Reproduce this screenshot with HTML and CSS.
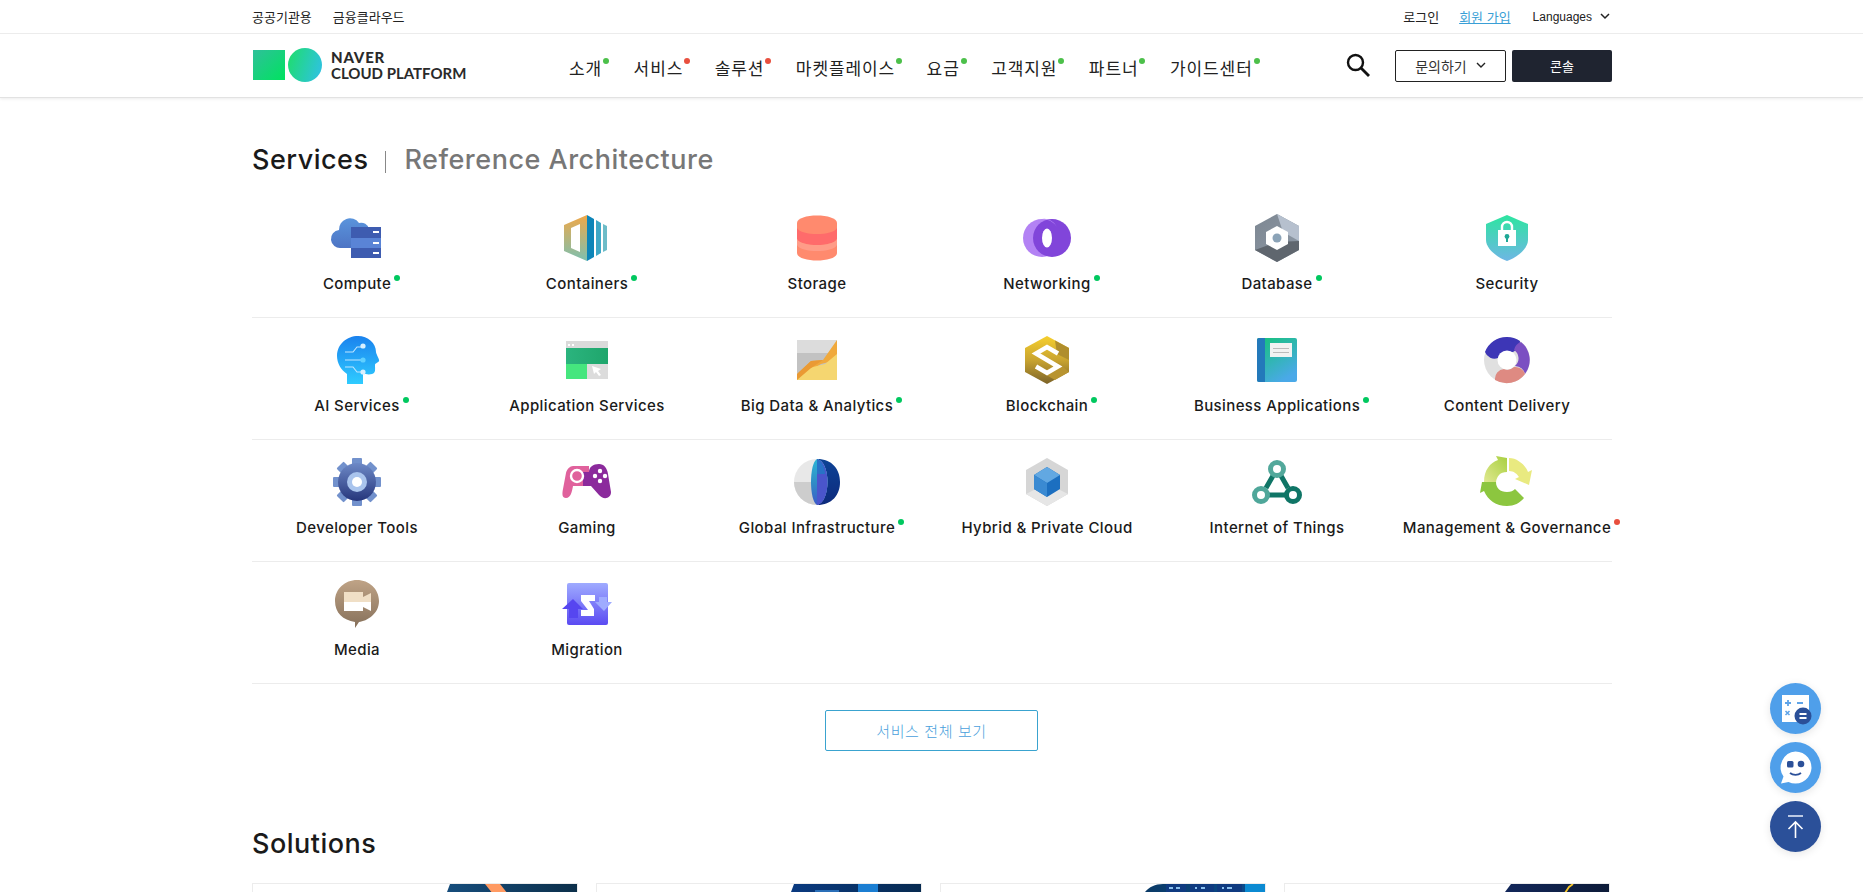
FILE: index.html
```html
<!DOCTYPE html>
<html lang="ko">
<head>
    <meta charset="UTF-8">
    <meta name="viewport" content="width=device-width, initial-scale=1.0">
    <title>NAVER CLOUD PLATFORM</title>
    <link rel="stylesheet" href="styles.css">
</head>
<body>
<div class="page">
    <header class="header">
        <div class="topbar">
            <div class="inner topbar-inner">
                <div class="top-links">
                    <a>공공기관용</a>
                    <a>금융클라우드</a>
                </div>
                <div class="top-links right">
                    <a>로그인</a>
                    <a class="join">회원 가입</a>
                    <a class="lang">Languages
                        <svg width="10" height="7" viewBox="0 0 10 7"><path d="M1 1l4 4 4-4" fill="none" stroke="#222" stroke-width="1.5"/></svg>
                    </a>
                </div>
            </div>
        </div>
        <div class="inner mainbar">
            <a class="logo">
                <svg width="70" height="34" viewBox="0 0 70 34">
                    <defs>
                        <linearGradient id="lgSq" x1="0" y1="0" x2="1" y2="1"><stop offset="0" stop-color="#2fc09a"/><stop offset="1" stop-color="#00e35f"/></linearGradient>
                        <linearGradient id="lgCi" x1="0" y1="0.3" x2="1" y2="0.6"><stop offset="0" stop-color="#1fdc72"/><stop offset="1" stop-color="#2ec3de"/></linearGradient>
                    </defs>
                    <rect x="0" y="2" width="32" height="30" fill="url(#lgSq)"/>
                    <circle cx="52" cy="17" r="17" fill="url(#lgCi)"/>
                </svg>
                <span class="logo-text"><b>NAVER</b><span>CLOUD PLATFORM</span></span>
            </a>
            <nav class="gnb">
                <a class="dot">소개</a>
                <a class="dot red">서비스</a>
                <a class="dot red">솔루션</a>
                <a class="dot">마켓플레이스</a>
                <a class="dot">요금</a>
                <a class="dot">고객지원</a>
                <a class="dot">파트너</a>
                <a class="dot">가이드센터</a>
            </nav>
            <div class="actions">
                <svg class="search" width="24" height="24" viewBox="0 0 24 24"><circle cx="9.5" cy="9.5" r="7.5" fill="none" stroke="#111" stroke-width="2.4"/><path d="M15 15l8 8" stroke="#111" stroke-width="2.8"/></svg>
                <a class="btn-ask">문의하기
                    <svg width="10" height="7" viewBox="0 0 10 7"><path d="M1 1l4 4 4-4" fill="none" stroke="#222" stroke-width="1.4"/></svg>
                </a>
                <a class="btn-console">콘솔</a>
            </div>
        </div>
    </header>

    <main class="inner">
        <div class="tabs">
            <h2 class="title">Services</h2>
            <span class="tab-sep"></span>
            <h2 class="title muted">Reference Architecture</h2>
        </div>

        <div class="svc-row">
            <a class="svc">
                <svg class="svc-icon" viewBox="0 0 60 60">
                    <defs><linearGradient id="g1" x1="0" y1="0" x2="0" y2="1"><stop offset="0" stop-color="#5a94dc"/><stop offset="1" stop-color="#4d74c4"/></linearGradient></defs>
                    <path d="M14 40a9 9 0 0 1-2-18 11 11 0 0 1 20-7 8 8 0 0 1 10 6v19z" fill="url(#g1)"/>
                    <rect x="24" y="19" width="30" height="11" fill="#3e5cb0"/>
                    <rect x="24" y="30" width="30" height="10" fill="#5a84d6"/>
                    <rect x="24" y="40" width="30" height="10" fill="#3e5cb0"/>
                    <path d="M46 23h6v2h-6zM46 34h6v2h-6zM46 44h6v2h-6z" fill="#fff"/>
                </svg>
                <span class="svc-name dot">Compute</span>
            </a>
            <a class="svc">
                <svg class="svc-icon" viewBox="0 0 60 60">
                    <defs><linearGradient id="g2" x1="0" y1="0" x2="0" y2="1"><stop offset="0" stop-color="#f0a848"/><stop offset="1" stop-color="#7cc0b0"/></linearGradient></defs>
                    <path d="M30 7v46L7 43V17zM23 16l-9 4v20l9 4z" fill="url(#g2)" fill-rule="evenodd"/>
                    <path d="M30 7l7 4v38l-7 4z" fill="#0d85b8"/>
                    <path d="M39 12l5 3v30l-5 3z" fill="#3fa8c6"/>
                    <path d="M46 16l4 2v24l-4 2z" fill="#6dbcc8"/>
                </svg>
                <span class="svc-name dot">Containers</span>
            </a>
            <a class="svc">
                <svg class="svc-icon" viewBox="0 0 60 60">
                    <path d="M10 15c0-10 40-10 40 0v30c0 10-40 10-40 0z" fill="#ff8a6e"/>
                    <path d="M10 20c4 8 36 8 40 0v11c-4 8-36 8-40 0z" fill="#ff6b6b"/>
                    <path d="M10 31c4 8 36 8 40 0v6c-4 8-36 8-40 0z" fill="#ff9c88"/>
                </svg>
                <span class="svc-name">Storage</span>
            </a>
            <a class="svc">
                <svg class="svc-icon" viewBox="0 0 60 60">
                    <circle cx="25" cy="30" r="19" fill="#b382f4"/>
                    <circle cx="35" cy="30" r="19" fill="#8145da"/>
                    <path d="M25 11a19 19 0 0 1 15 8 14 14 0 0 0-15-8z" fill="#b382f4"/>
                    <ellipse cx="30" cy="30" rx="5" ry="9.5" fill="#fff"/>
                </svg>
                <span class="svc-name dot">Networking</span>
            </a>
            <a class="svc">
                <svg class="svc-icon" viewBox="0 0 60 60">
                    <defs><linearGradient id="g5" x1="0" y1="0" x2="1" y2="1"><stop offset="0" stop-color="#7d8792"/><stop offset="1" stop-color="#8e99a6"/></linearGradient></defs>
                    <path d="M30 6l22 12v24L30 54 8 42V18z" fill="url(#g5)"/>
                    <path d="M30 6l22 12v15L36 24z" fill="#b6c0ce"/>
                    <path d="M8 42l22-8 22-1v9L30 54z" fill="#5f666e"/>
                    <path d="M30 18l11 6v12l-11 6-11-6V24z" fill="#fff"/>
                    <circle cx="30" cy="30" r="4.5" fill="#8ba3b7"/>
                </svg>
                <span class="svc-name dot">Database</span>
            </a>
            <a class="svc">
                <svg class="svc-icon" viewBox="0 0 60 60">
                    <defs><linearGradient id="g6" x1="0" y1="0" x2="0" y2="1"><stop offset="0" stop-color="#2de5a0"/><stop offset="1" stop-color="#6eb6e4"/></linearGradient></defs>
                    <path d="M30 7l21 9v16c0 9-12 18-21 21-9-3-21-12-21-21V16z" fill="url(#g6)"/>
                    <path d="M25 22v-3a5 5 0 0 1 10 0v3" fill="none" stroke="#fff" stroke-width="2.4"/>
                    <rect x="21" y="22" width="18" height="16" fill="#fff"/>
                    <circle cx="30" cy="28.5" r="2.4" fill="#1fa896"/>
                    <rect x="29" y="29" width="2" height="5" fill="#1fa896"/>
                </svg>
                <span class="svc-name">Security</span>
            </a>
        </div>

        <div class="svc-row">
            <a class="svc">
                <svg class="svc-icon" viewBox="0 0 60 60">
                    <defs><linearGradient id="g7" x1="0" y1="0" x2="0" y2="1"><stop offset="0" stop-color="#1a82ee"/><stop offset="1" stop-color="#2fccff"/></linearGradient></defs>
                    <path d="M31 6c10 0 18 7 18 16 0 2 4 8 3 9-1 2-4 2-4 4 0 4 1 8-3 9-3 1-7 0-9 0v10H20V44c-6-4-10-11-10-18C10 14 20 6 31 6z" fill="url(#g7)"/>
                    <g fill="none" stroke="#bfe6ff" stroke-width="1.1">
                        <path d="M36 17h-6l-4 5h-8M36 30H18M36 42h-6l-4-5h-8"/>
                    </g>
                    <circle cx="36" cy="16" r="2.6" fill="#d8f0ff"/>
                    <circle cx="36" cy="30" r="2.6" fill="#5fd0ff"/>
                    <circle cx="36" cy="42" r="2.6" fill="#d8f0ff"/>
                </svg>
                <span class="svc-name dot">AI Services</span>
            </a>
            <a class="svc">
                <svg class="svc-icon" viewBox="0 0 60 60">
                    <defs><linearGradient id="g8" x1="0" y1="0" x2="1" y2="0"><stop offset="0" stop-color="#2bb47e"/><stop offset="1" stop-color="#1fa66c"/></linearGradient></defs>
                    <rect x="9" y="11" width="42" height="7" fill="#dadada"/>
                    <rect x="9" y="18" width="42" height="16" fill="url(#g8)"/>
                    <rect x="9" y="34" width="21" height="15" fill="#45e67e"/>
                    <rect x="30" y="34" width="21" height="15" fill="#dcdcdc"/>
                    <path d="M35 36l9 3-3 2 3 4-2 1-3-4-2 2z" fill="#fff"/>
                    <path d="M11 14h2v2h-2zM15 14h2v2h-2z" fill="#fff"/>
                </svg>
                <span class="svc-name">Application Services</span>
            </a>
            <a class="svc">
                <svg class="svc-icon" viewBox="0 0 60 60">
                    <rect x="10" y="10" width="40" height="13" fill="#dcdcdc"/>
                    <rect x="10" y="23" width="40" height="27" fill="#c2c2c2"/>
                    <path d="M10 44l14-13 12-1 14-20v20L34 34l-8 5z" fill="#f0a93c"/>
                    <path d="M10 50v-6l16-7 12-3 12-10v26z" fill="#f5d670"/>
                    <path d="M10 50v-6l14-13 12-1-12 8z" fill="#ea9a34"/>
                </svg>
                <span class="svc-name dot">Big Data &amp; Analytics</span>
            </a>
            <a class="svc">
                <svg class="svc-icon" viewBox="0 0 60 60">
                    <defs><linearGradient id="g10" x1="0" y1="0" x2="0" y2="1"><stop offset="0" stop-color="#f6cf2e"/><stop offset="0.5" stop-color="#c9a430"/><stop offset="1" stop-color="#7c6328"/></linearGradient></defs>
                    <path d="M30 6l22 12v24L30 54 8 42V18z" fill="url(#g10)"/>
                    <path d="M38 10.4l14 7.6v12L40 24z" fill="#b08e2c"/>
                    <path d="M38 50l-14-8 4-2 14-7 10 9z" fill="#b89430"/>
                    <path d="M41 23.5l-11-6.500-11 6.500 22 13-11 6.500-11-6.500" fill="none" stroke="#fff" stroke-width="4.5"/>
                </svg>
                <span class="svc-name dot">Blockchain</span>
            </a>
            <a class="svc">
                <svg class="svc-icon" viewBox="0 0 60 60">
                    <defs><linearGradient id="g11" x1="0" y1="0" x2="0.6" y2="1"><stop offset="0" stop-color="#14c377"/><stop offset="1" stop-color="#4aa9e8"/></linearGradient></defs>
                    <rect x="10" y="8" width="40" height="44" rx="2" fill="url(#g11)"/>
                    <path d="M12 8h6v44h-6a2 2 0 0 1-2-2V10a2 2 0 0 1 2-2z" fill="#2379ba"/>
                    <rect x="23" y="13" width="22" height="14" fill="#f2f2f2"/>
                    <path d="M26 18h16v1H26zM26 22h16v1H26z" fill="#bbb"/>
                </svg>
                <span class="svc-name dot">Business Applications</span>
            </a>
            <a class="svc">
                <svg class="svc-icon" viewBox="0 0 60 60">
                    <circle cx="30" cy="30" r="23" fill="#e0e0e0"/>
                    <path d="M30 7a23 23 0 0 1 13 4 11 11 0 0 1-7 11H30a11 11 0 0 0-9 6 10 10 0 0 1-13-6A23 23 0 0 1 30 7z" fill="#3d36b6"/>
                    <path d="M44 12a23 23 0 0 1 4 32 11 11 0 0 0-10-8 10 10 0 0 0-1-16 11 11 0 0 1 7-8z" fill="#7b4fc2"/>
                    <path d="M48 44a23 23 0 0 1-30 6 10 10 0 0 1 9-11 10 10 0 0 0 10-2 10 10 0 0 1 11 7z" fill="#de8a82"/>
                    <circle cx="30" cy="30" r="9.5" fill="#fff"/>
                </svg>
                <span class="svc-name">Content Delivery</span>
            </a>
        </div>

        <div class="svc-row">
            <a class="svc">
                <svg class="svc-icon" viewBox="0 0 60 60">
                    <defs><linearGradient id="g13" x1="0" y1="0" x2="0" y2="1"><stop offset="0" stop-color="#6d89c6"/><stop offset="1" stop-color="#26367c"/></linearGradient></defs>
                    <g fill="#7291cc">
                        <rect x="25" y="6" width="10" height="48" rx="1"/>
                        <rect x="6" y="25" width="48" height="10" rx="1"/>
                        <rect x="25" y="6" width="10" height="48" rx="1" transform="rotate(45 30 30)"/>
                        <rect x="25" y="6" width="10" height="48" rx="1" transform="rotate(-45 30 30)"/>
                    </g>
                    <circle cx="30" cy="30" r="19" fill="url(#g13)"/>
                    <circle cx="30" cy="30" r="10" fill="#a9c4ed"/>
                    <circle cx="30" cy="30" r="5" fill="#fff"/>
                </svg>
                <span class="svc-name">Developer Tools</span>
            </a>
            <a class="svc">
                <svg class="svc-icon" viewBox="0 0 60 60">
                    <path d="M16 14h16v20H16c-1 5-2 12-7 12-4 0-4-4-3-9l3-16c1-4 4-7 7-7z" fill="#e0619c"/>
                    <path d="M32 20h-6v14h8l8 9c4 5 12 4 12-3l-3-18c-1-6-4-10-9-10-6 0-10 3-10 8z" fill="#8b2a9c"/>
                    <circle cx="20" cy="24" r="6" fill="none" stroke="#fff" stroke-width="2.4"/>
                    <g fill="#fff"><circle cx="43" cy="19" r="2.2"/><circle cx="43" cy="29" r="2.2"/><circle cx="38" cy="24" r="2.2"/><circle cx="48" cy="24" r="2.2"/></g>
                </svg>
                <span class="svc-name">Gaming</span>
            </a>
            <a class="svc">
                <svg class="svc-icon" viewBox="0 0 60 60">
                    <defs>
                        <linearGradient id="g15" x1="0" y1="0" x2="0" y2="1"><stop offset="0" stop-color="#2cb5d6"/><stop offset="0.5" stop-color="#2f8ec6"/><stop offset="1" stop-color="#3b5bc8"/></linearGradient>
                        <linearGradient id="g15b" x1="0" y1="0" x2="0" y2="1"><stop offset="0" stop-color="#0d4396"/><stop offset="1" stop-color="#0d2a7c"/></linearGradient>
                    </defs>
                    <circle cx="30" cy="30" r="23" fill="#e8e8e8"/>
                    <path d="M7 30a23 23 0 0 0 23 23V30z" fill="#cdcdcd"/>
                    <path d="M30 7c14 3 14 43 0 46 15 0 23-10 23-23S45 7 30 7z" fill="url(#g15b)"/>
                    <path d="M30 7c-8 4-8 42 0 46 14-3 14-43 0-46z" fill="url(#g15)"/>
                    <path d="M30 7c14 3 14 43 0 46z" fill="#4a55cc"/>
                    <path d="M30 7c8 4 8 15 8 15H30z" fill="#1a7fc4" opacity=".7"/>
                </svg>
                <span class="svc-name dot">Global Infrastructure</span>
            </a>
            <a class="svc">
                <svg class="svc-icon" viewBox="0 0 60 60">
                    <path d="M30 6l21 12v24L30 54 9 42V18z" fill="#d6d6d6"/>
                    <path d="M9 42l10-5 11 6 11-6 10 5-21 12z" fill="#e6e6e6"/>
                    <path d="M30 15l13 8v14l-13 8-13-8V23z" fill="#1c6fc0"/>
                    <path d="M30 15l13 8-13 8-13-8z" fill="#62a8e2"/>
                    <path d="M17 23l13 8v14l-13-8z" fill="#3a8ad2"/>
                </svg>
                <span class="svc-name">Hybrid &amp; Private Cloud</span>
            </a>
            <a class="svc">
                <svg class="svc-icon" viewBox="0 0 60 60">
                    <path d="M27 22L19 36M33 22l8 14M22 43h16" stroke="#0f7566" stroke-width="5" fill="none"/>
                    <circle cx="30" cy="17" r="6.5" fill="#fff" stroke="#52a89b" stroke-width="5"/>
                    <circle cx="14" cy="43" r="6.5" fill="#fff" stroke="#4fa79a" stroke-width="5"/>
                    <circle cx="46" cy="43" r="6.5" fill="#fff" stroke="#0f7566" stroke-width="5"/>
                </svg>
                <span class="svc-name">Internet of Things</span>
            </a>
            <a class="svc">
                <svg class="svc-icon" viewBox="0 0 60 60">
                    <defs><linearGradient id="g18" x1="1" y1="0" x2="0" y2="1"><stop offset="0" stop-color="#a8d040"/><stop offset="1" stop-color="#e0e890"/></linearGradient></defs>
                    <path d="M32 6c9 0 17 8 19 14l4-2-3 15-14-6 4-2c-2-3-5-6-10-6z" fill="#e9ea80"/>
                    <path d="M30 6v14c-7 0-10 4-11 10H7C7 18 13 11 21 8l-2-4 11 2z" fill="url(#g18)"/>
                    <path d="M5 30h14c0 6 4 10 11 10 4 0 6-1 8-3l9 9c-4 5-10 8-17 8-11 0-19-6-23-15l-4 2 2-11z" fill="#8cc63f"/>
                </svg>
                <span class="svc-name dot red">Management &amp; Governance</span>
            </a>
        </div>

        <div class="svc-row">
            <a class="svc">
                <svg class="svc-icon" viewBox="0 0 60 60">
                    <defs><linearGradient id="g19" x1="0" y1="0" x2="0" y2="1"><stop offset="0" stop-color="#bfa386"/><stop offset="1" stop-color="#86705a"/></linearGradient></defs>
                    <path d="M30 6c12 0 22 9 22 21 0 13-12 20-20 21l-4 6v-6C16 46 8 39 8 27 8 15 18 6 30 6z" fill="url(#g19)"/>
                    <rect x="17" y="18" width="19" height="19" fill="#f0dfc6"/>
                    <rect x="17" y="28" width="19" height="9" fill="#fff"/>
                    <path d="M36 23l8-4v9h-8z" fill="#f0dfc6"/>
                    <path d="M36 28h8v9l-8-4z" fill="#fff"/>
                </svg>
                <span class="svc-name">Media</span>
            </a>
            <a class="svc">
                <svg class="svc-icon" viewBox="0 0 60 60">
                    <defs><linearGradient id="g20" x1="0" y1="0" x2="0" y2="1"><stop offset="0" stop-color="#9fabff"/><stop offset="1" stop-color="#5b4bf2"/></linearGradient></defs>
                    <rect x="10" y="9" width="41" height="42" rx="2" fill="url(#g20)"/>
                    <path d="M24 21h14v6h-6l5 8v7H24v-6h7l-7-9z" fill="#fff"/>
                    <path d="M16 25l10 10h-5v9h-9v-9H5z" fill="#5646f0"/>
                    <path d="M47 37l-9-9h4v-5h8v5h5z" fill="#9fabff"/>
                </svg>
                <span class="svc-name">Migration</span>
            </a>
        </div>

        <div class="more">
            <a class="btn-more">서비스 전체 보기</a>
        </div>

        <h2 class="title solutions">Solutions</h2>
        <div class="cards">
            <div class="card">
                <svg class="card-art" width="130" height="30" viewBox="0 0 130 30">
                    <defs><linearGradient id="c1" x1="0" x2="1"><stop offset="0" stop-color="#164d7c"/><stop offset="1" stop-color="#0c2f4a"/></linearGradient></defs>
                    <path d="M3 0h127v30H0V8z" fill="url(#c1)"/>
                    <path d="M38 0h15l8 10H46z" fill="#ff9a62"/>
                </svg>
            </div>
            <div class="card">
                <svg class="card-art" width="130" height="30" viewBox="0 0 130 30">
                    <defs><linearGradient id="c2" x1="0" x2="1"><stop offset="0" stop-color="#0a3a80"/><stop offset="1" stop-color="#072a50"/></linearGradient></defs>
                    <path d="M3 0h127v30H0V8z" fill="url(#c2)"/>
                    <rect x="24" y="6" width="24" height="24" fill="#2a6fb8"/>
                    <rect x="67" y="0" width="20" height="8" fill="#1b7ed2"/>
                </svg>
            </div>
            <div class="card">
                <svg class="card-art" width="120" height="30" viewBox="0 0 120 30">
                    <defs><linearGradient id="c3" x1="0" x2="1"><stop offset="0" stop-color="#0a3a66"/><stop offset="1" stop-color="#0a4a8a"/></linearGradient></defs>
                    <path d="M18 0h82v30H0V8c4-5 10-8 18-8z" fill="url(#c3)"/>
                    <path d="M21 0h20v30H21zM45 0h24v30H45zM72 0h25v30H72z" fill="#0f3a80"/>
                    <path d="M24 3h4v2h-4zM31 3h4v2h-4zM50 3h2v2h-2zM56 3h4v2h-4zM77 3h2v2h-2zM82 3h5v2h-5z" fill="#8ac0ee"/>
                    <rect x="100" width="20" height="30" fill="#0b8ad2"/>
                </svg>
            </div>
            <div class="card">
                <svg class="card-art" width="104" height="30" viewBox="0 0 104 30">
                    <defs><linearGradient id="c4" x1="0" x2="1"><stop offset="0" stop-color="#12275a"/><stop offset="1" stop-color="#0d1b38"/></linearGradient></defs>
                    <path d="M6 0h98v30H0V8z" fill="url(#c4)"/>
                    <path d="M52 10l6 2 6-9 4-3" fill="none" stroke="#f5c528" stroke-width="1.8"/>
                </svg>
            </div>
        </div>
    </main>
</div>

<div class="floats">
    <a class="float light">
        <svg width="51" height="51" viewBox="0 0 51 51">
            <rect x="12" y="12" width="27" height="27" fill="#fff"/>
            <path d="M15 20h6M18 17v6M27 20h6" stroke="#5fa4e8" stroke-width="1.8"/>
            <path d="M15.5 28l4 4M19.5 28l-4 4" stroke="#5fa4e8" stroke-width="1.6"/>
            <circle cx="33" cy="33" r="8.5" fill="#2b5099"/>
            <path d="M29.5 31h7M29.5 35h7" stroke="#fff" stroke-width="1.8"/>
        </svg>
    </a>
    <a class="float light">
        <svg width="51" height="51" viewBox="0 0 51 51">
            <path d="M25.5 9.5a16 16 0 1 1-7 30.4L11 41.5l2.5-7a16 16 0 0 1 12-25z" fill="#fff"/>
            <rect x="17" y="19" width="6.5" height="6.5" rx="1.5" fill="#2b5099"/>
            <circle cx="31" cy="22" r="3.3" fill="#2b5099"/>
            <path d="M20 31c3 2.5 8 2.5 11 0" fill="none" stroke="#2b5099" stroke-width="1.8"/>
        </svg>
    </a>
    <a class="float dark">
        <svg width="51" height="51" viewBox="0 0 51 51">
            <path d="M18 15h15" stroke="#dfe6f5" stroke-width="1.6"/>
            <path d="M25.5 37V21M18.5 28l7-7 7 7" fill="none" stroke="#fff" stroke-width="1.6"/>
        </svg>
    </a>
</div>
</body>
</html>
```

FILE: styles.css
```css
*{
    padding: 0;
    margin: 0;
    box-sizing: border-box;
}
html, body{
    height: 100%;
}
body{
    background: #fff;
    color: #111;
    font-family: Inter, "Noto Sans CJK KR", sans-serif;
}
a{
    color: inherit;
    text-decoration: none;
    cursor: pointer;
}
.page{
    height: 100vh;
    overflow: hidden;
}
.inner{
    width: 1360px;
    margin-left: 252px;
}

/* header */
.header{
    height: 98px;
    border-bottom: 1px solid #e2e2e2;
    box-shadow: 0 1px 3px rgba(0,0,0,.08);
}
.topbar{
    height: 34px;
    border-bottom: 1px solid #ececec;
}
.topbar-inner{
    height: 33px;
    display: flex;
    justify-content: space-between;
    align-items: center;
}
.top-links{
    display: flex;
    align-items: center;
    gap: 21px;
    font-family: "Noto Sans CJK KR", sans-serif;
    font-size: 13px;
    color: #222;
}
.top-links.right{
    gap: 20px;
    padding-right: 2px;
}
.join{
    color: #3a9fd6;
    text-decoration: underline;
}
.lang{
    display: flex;
    align-items: center;
    gap: 8px;
    margin-left: 2px;
    font-family: "Liberation Sans", sans-serif;
    font-size: 12px;
}
.mainbar{
    height: 63px;
    display: flex;
    align-items: center;
    position: relative;
}
.logo{
    display: flex;
    align-items: center;
    gap: 8px;
    width: 317px;
    margin-top: -1px;
    padding-left: 1px;
}
.logo-text{
    display: flex;
    flex-direction: column;
    font-family: Lato, sans-serif;
    font-size: 15px;
    line-height: 16px;
    color: #2a2a2a;
    font-weight: 700;
    white-space: nowrap;
}
.logo-text b{
    font-weight: 900;
    letter-spacing: .8px;
}
.gnb{
    display: flex;
    gap: 31.5px;
    font-family: "Noto Sans CJK KR", sans-serif;
    font-size: 17px;
    letter-spacing: .9px;
    color: #222;
    padding-top: 16px;
    height: 52px;
    line-height: 24px;
}
.dot{
    position: relative;
}
.dot::after{
    content: "";
    position: absolute;
    right: -7px;
    top: 2px;
    width: 6px;
    height: 6px;
    border-radius: 50%;
    background: #4cc04a;
}
.dot.red::after{
    background: #e8503f;
}
.actions{
    display: flex;
    align-items: center;
    margin-left: auto;
}
.search{
    margin-right: 25px;
    margin-top: -2px;
}
.btn-ask{
    width: 111px;
    height: 32px;
    border: 1px solid #222;
    border-radius: 2px;
    display: flex;
    align-items: center;
    justify-content: center;
    gap: 9px;
    font-family: "Noto Sans CJK KR", sans-serif;
    font-size: 14px;
    color: #333;
}
.btn-console{
    width: 100px;
    height: 32px;
    margin-left: 6px;
    background: #1f2430;
    border-radius: 2px;
    color: #fff;
    display: flex;
    align-items: center;
    justify-content: center;
    font-family: "Noto Sans CJK KR", sans-serif;
    font-size: 13px;
}

/* services */
.tabs{
    display: flex;
    align-items: center;
    height: 40px;
    margin-top: 42px;
    margin-bottom: 16px;
}
.title{
    font-size: 27px;
    font-weight: 500;
    line-height: 40px;
    letter-spacing: .5px;
    color: #1a1a1a;
}
.title.muted{
    color: #777;
}
.tab-sep{
    width: 1px;
    height: 22px;
    background: #888;
    margin: 4px 18px 0 17px;
}
.svc-row{
    height: 122px;
    display: grid;
    grid-template-columns: repeat(6, 210px);
    column-gap: 20px;
    border-bottom: 1px solid #ececec;
}
.svc{
    display: flex;
    flex-direction: column;
    align-items: center;
    padding-top: 12px;
}
.svc-icon{
    width: 60px;
    height: 60px;
    flex: none;
}
.svc-name{
    margin-top: 6px;
    font-size: 15px;
    font-weight: 500;
    line-height: 20px;
    letter-spacing: .4px;
    color: #1a1a1a;
    white-space: nowrap;
}
.svc-name.dot::after{
    background: #00c85f;
    top: 1px;
    right: -9px;
    width: 6px;
    height: 6px;
}
.svc-name.dot.red::after{
    background: #e8503f;
}
.more{
    display: flex;
    justify-content: center;
    margin-top: 26px;
    margin-left: -1px;
}
.btn-more{
    width: 213px;
    height: 41px;
    border: 1px solid #3aa3cf;
    border-radius: 2px;
    display: flex;
    align-items: center;
    justify-content: center;
    font-family: "Noto Sans CJK KR", sans-serif;
    font-size: 15px;
    font-weight: 300;
    letter-spacing: .6px;
    color: #4a9fdc;
}
.solutions{
    margin-top: 73px;
}

/* solution cards, only the top edge shows */
.cards{
    display: flex;
    gap: 18px;
    margin-top: 19px;
}
.card{
    width: 326px;
    height: 200px;
    border: 1px solid #ececec;
    display: flex;
    justify-content: flex-end;
    align-items: flex-start;
}
.card-art{
    display: block;
}

/* floating buttons */
.floats{
    position: fixed;
    right: 42px;
    bottom: 40px;
    display: flex;
    flex-direction: column;
    gap: 8px;
}
.float{
    width: 51px;
    height: 51px;
    border-radius: 50%;
    box-shadow: 0 2px 8px rgba(0,0,0,.1);
}
.float svg{
    display: block;
}
.float.light{
    background: #4f9fea;
}
.float.dark{
    background: #2b5099;
}
```
